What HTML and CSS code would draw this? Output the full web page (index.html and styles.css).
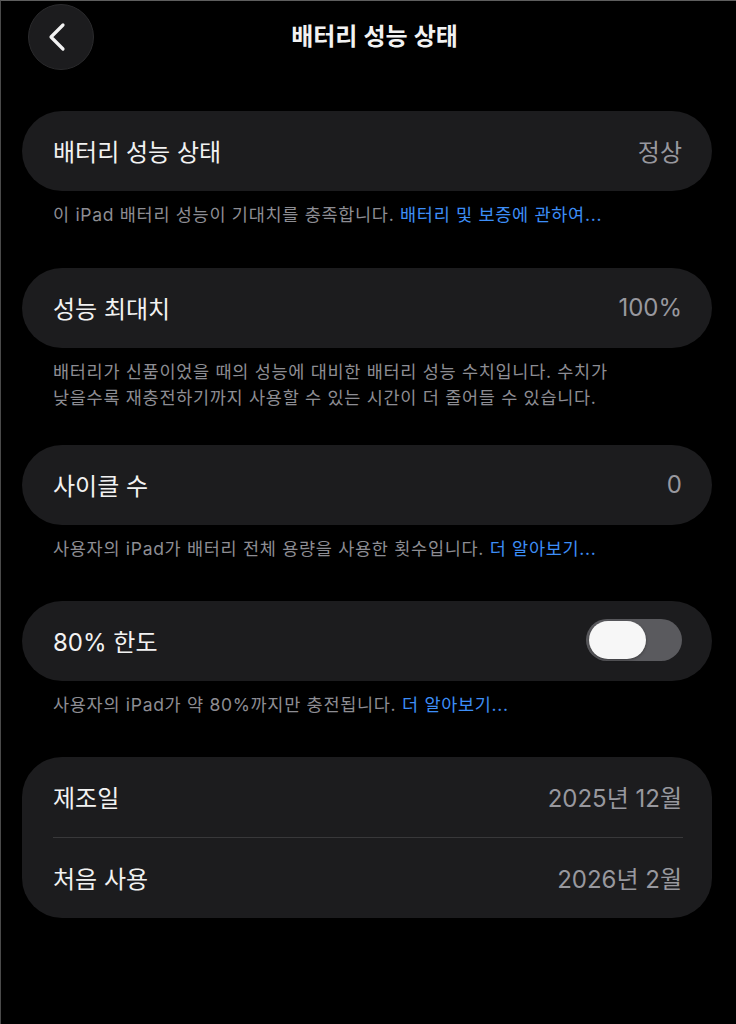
FILE: index.html
```html
<!DOCTYPE html>
<html lang="ko">
<head>
<meta charset="utf-8">
<title>배터리 성능 상태</title>
<link rel="stylesheet" href="styles.css">
</head>
<body>
<div class="screen">
  <header class="nav">
    <button class="back" aria-label="뒤로">
      <svg width="26" height="32" viewBox="0 0 26 32"><path d="M17 4 L5 16 L17 28" fill="none" stroke="#f2f2f2" stroke-width="3.2" stroke-linecap="round" stroke-linejoin="round"/></svg>
    </button>
    <h1 class="title">배터리 성능 상태</h1>
  </header>

  <main class="content">
    <section class="group">
      <div class="card">
        <div class="row"><span class="label">배터리 성능 상태</span><span class="value">정상</span></div>
      </div>
      <p class="foot first">이 iPad 배터리 성능이 기대치를 충족합니다. <a class="link">배터리 및 보증에 관하여...</a></p>
    </section>

    <section class="group">
      <div class="card">
        <div class="row"><span class="label">성능 최대치</span><span class="value">100%</span></div>
      </div>
      <p class="foot two">배터리가 신품이었을 때의 성능에 대비한 배터리 성능 수치입니다. 수치가<br>낮을수록 재충전하기까지 사용할 수 있는 시간이 더 줄어들 수 있습니다.</p>
    </section>

    <section class="group">
      <div class="card">
        <div class="row"><span class="label">사이클 수</span><span class="value">0</span></div>
      </div>
      <p class="foot">사용자의 iPad가 배터리 전체 용량을 사용한 횟수입니다. <a class="link">더 알아보기...</a></p>
    </section>

    <section class="group">
      <div class="card">
        <div class="row"><span class="label">80% 한도</span><span class="toggle"><span class="knob"></span></span></div>
      </div>
      <p class="foot">사용자의 iPad가 약 80%까지만 충전됩니다. <a class="link">더 알아보기...</a></p>
    </section>

    <section class="group">
      <div class="card">
        <div class="row"><span class="label">제조일</span><span class="value">2025년 12월</span></div>
        <div class="divider"></div>
        <div class="row"><span class="label">처음 사용</span><span class="value">2026년 2월</span></div>
      </div>
    </section>
  </main>
</div>
</body>
</html>
```
FILE: styles.css
```css
* { box-sizing: border-box; }
html, body { margin: 0; padding: 0; background: #000; }
body {
  font-family: Inter, "Noto Sans CJK KR", sans-serif;
  color: #f2f2f2;
  width: 736px;
  height: 1024px;
  overflow: hidden;
}
.screen {
  height: 1024px;
  border-top: 1px solid #5e5e5e;
  border-left: 1px solid #4a4a4a;
}
.nav {
  position: relative;
  height: 110px;
  display: flex;
  justify-content: center;
}
.back {
  position: absolute;
  left: 27px;
  top: 3px;
  width: 66px;
  height: 66px;
  border-radius: 50%;
  background: #1c1c1e;
  border: 1px solid #2a2a2c;
  display: flex;
  align-items: center;
  justify-content: center;
  padding: 0 4px 0 0;
}
.title {
  margin: 0;
  margin-top: 18px;
  font-size: 24px;
  font-weight: 600;
  line-height: 36px;
  height: 36px;
  color: #f2f2f2;
  padding-left: 12px;
}
.content {
  padding: 0 24px 0 21px;
}
.card {
  background: #1c1c1e;
  border-radius: 40px;
}
.row {
  height: 80px;
  display: flex;
  align-items: center;
  justify-content: space-between;
  padding: 0 30px 2px 31px;
}
.label {
  font-size: 24px;
  color: #f2f2f2;
}
.value {
  font-size: 24px;
  color: #98989e;
}
.foot {
  margin: 11px 0 39px;
  padding-left: 31px;
  font-size: 17.5px;
  letter-spacing: 0.7px;
  line-height: 26px;
  color: #8d8d93;
}
.foot.first { margin-bottom: 40px; }
.foot.two { margin-bottom: 34px; }
.link { color: #3d8ef7; }
.divider {
  height: 1px;
  background: #38383a;
  margin: 0 29px 0 31px;
}
.toggle {
  width: 96px;
  height: 42px;
  border-radius: 21px;
  background: #5a5a5e;
  display: flex;
  align-items: center;
  padding: 0 3px;
}
.knob {
  width: 57px;
  height: 38px;
  border-radius: 19px;
  background: #f7f7f7;
  box-shadow: 0 1px 3px rgba(0,0,0,0.35);
}
```
